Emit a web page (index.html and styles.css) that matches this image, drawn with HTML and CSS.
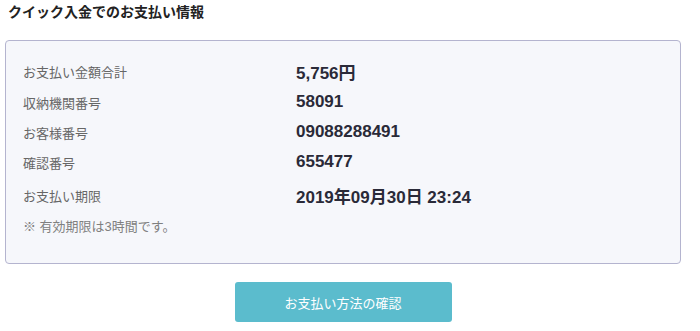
FILE: index.html
```html
<!DOCTYPE html>
<html lang="ja">
  <head>
    <meta charset="UTF-8" />
    <meta name="viewport" content="width=device-width, initial-scale=1.0" />
    <title>お支払い情報</title>
    <link rel="stylesheet" href="styles.css">
  </head>
  <body>
    <div class="main-container">
      <h1 class="page-title">クイック入金でのお支払い情報</h1>
      <div class="info-box">
        <div class="info-row info-row-first">
          <div class="info-label">お支払い金額合計</div>
          <div class="info-value">5,756円</div>
        </div>
        <div class="info-row">
          <div class="info-label">収納機関番号</div>
          <div class="info-value">58091</div>
        </div>
        <div class="info-row">
          <div class="info-label">お客様番号</div>
          <div class="info-value">09088288491</div>
        </div>
        <div class="info-row">
          <div class="info-label">確認番号</div>
          <div class="info-value">655477</div>
        </div>
        <div class="info-row info-row-last">
          <div class="info-label">お支払い期限</div>
          <div class="info-value">2019年09月30日 23:24</div>
        </div>
        <p class="info-note">※ 有効期限は3時間です。</p>
      </div>
      <div class="button-container">
        <button class="btn-confirm">お支払い方法の確認</button>
      </div>
    </div>
  </body>
</html>
```

FILE: styles.css
```css
html,
body {
  margin: 0;
  font-family: "Liberation Sans", Arial, "Noto Sans CJK JP", sans-serif;
  color: #222;
  background: #fff;
}
.main-container {
  width: 676px;
  padding: 0 15px 0 5px;
}
.page-title {
  margin: 0;
  padding: 4px 0 0 3px;
  height: 40px;
  box-sizing: border-box;
  font-size: 14px;
  line-height: 17px;
  font-weight: bold;
  color: #222;
}
.info-box {
  border: 1px solid #b4b4cf;
  border-radius: 4px;
  background: #f6f7fb;
  padding: 15px 17px 26px;
}
.info-row {
  display: flex;
  align-items: center;
  height: 30px;
}
.info-row-first {
  height: 31px;
}
.info-row-last {
  margin-top: 3px;
}
.info-label {
  width: 273px;
  font-size: 13px;
  color: #666;
}
.info-value {
  font-size: 17px;
  font-weight: bold;
  color: #2a2a38;
}
.info-note {
  margin: 7px 0 0;
  font-size: 13px;
  line-height: 20px;
  color: #808080;
}
.button-container {
  display: flex;
  justify-content: center;
  padding-top: 18px;
}
.btn-confirm {
  width: 217px;
  height: 40px;
  border: 0;
  border-radius: 3px;
  background-color: #5bbccd;
  color: #fff;
  font-family: inherit;
  font-size: 13px;
}
```
